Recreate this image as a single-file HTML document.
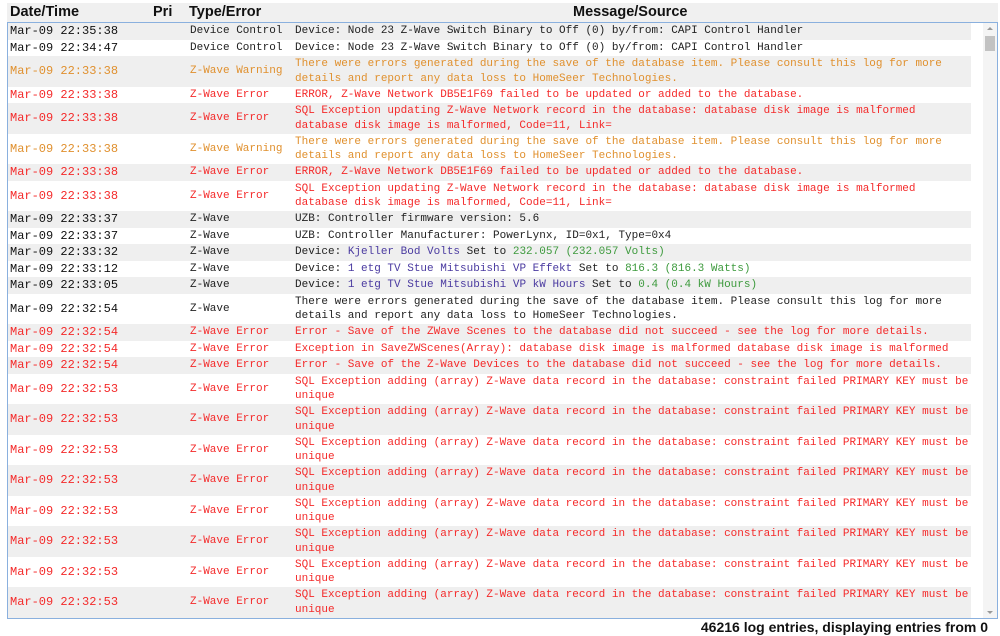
<!DOCTYPE html>
<html><head><meta charset="utf-8"><style>
body{margin:0;width:1000px;height:636px;background:#fff;overflow:hidden;font-family:"Liberation Sans",sans-serif;position:relative}
.hdr{position:absolute;left:7px;top:3px;width:991px;height:19px;background:#f0f0f0}
.hdr span{position:absolute;top:1px;font-weight:bold;font-size:14.5px;color:#111}
.box{position:absolute;left:7px;top:22px;width:989px;height:595px;border:1px solid #8ab0de;overflow:hidden;background:#fff}
.rows{position:absolute;left:0;top:0;width:963px}
.r{position:relative;box-sizing:border-box;font-family:"Liberation Mono",monospace;font-size:11px;line-height:14.5px;padding:1px 0;color:#222}
.r:nth-child(odd){background:#efefef}
.r.d{height:30.5px}.r:not(.d){height:16.5px}
.dt{position:absolute;left:2px;font-size:12px;color:#111;top:1px}
.r.d .dt,.r.d .ty{top:8px}
.ty{position:absolute;left:182px;top:1px}
.m{margin-left:287px;white-space:pre}
.o{color:#e0902e}.o .dt{color:#e0902e}
.e{color:#f42a2a}.e .dt{color:#f42a2a}
.b{color:#4a3aa0}.g{color:#3d9a3d}
.sb{position:absolute;right:0;top:0;width:14px;height:595px;background:#f4f4f4}
.th{position:absolute;right:2px;top:13px;width:10px;height:15px;background:#c2c2c2}
.up,.dn{position:absolute;right:4px;width:0;height:0;border-left:3px solid transparent;border-right:3px solid transparent}
.up{top:4px;border-bottom:3px solid #999}.dn{bottom:4px;border-top:3px solid #999}
.ft{position:absolute;right:12px;top:619px;font-weight:bold;font-size:14px;color:#111}
</style></head><body>
<div class="hdr"><span style="left:3px">Date/Time</span><span style="left:146px">Pri</span><span style="left:182px">Type/Error</span><span style="left:566px">Message/Source</span></div>
<div class="box"><div class="rows">
<div class="r"><span class="dt">Mar-09 22:35:38</span><span class="ty">Device Control</span><div class="m">Device: Node 23 Z-Wave Switch Binary to Off (0) by/from: CAPI Control Handler</div></div>
<div class="r"><span class="dt">Mar-09 22:34:47</span><span class="ty">Device Control</span><div class="m">Device: Node 23 Z-Wave Switch Binary to Off (0) by/from: CAPI Control Handler</div></div>
<div class="r d o"><span class="dt">Mar-09 22:33:38</span><span class="ty">Z-Wave Warning</span><div class="m">There were errors generated during the save of the database item. Please consult this log for more
details and report any data loss to HomeSeer Technologies.</div></div>
<div class="r e"><span class="dt">Mar-09 22:33:38</span><span class="ty">Z-Wave Error</span><div class="m">ERROR, Z-Wave Network DB5E1F69 failed to be updated or added to the database.</div></div>
<div class="r d e"><span class="dt">Mar-09 22:33:38</span><span class="ty">Z-Wave Error</span><div class="m">SQL Exception updating Z-Wave Network record in the database: database disk image is malformed
database disk image is malformed, Code=11, Link=</div></div>
<div class="r d o"><span class="dt">Mar-09 22:33:38</span><span class="ty">Z-Wave Warning</span><div class="m">There were errors generated during the save of the database item. Please consult this log for more
details and report any data loss to HomeSeer Technologies.</div></div>
<div class="r e"><span class="dt">Mar-09 22:33:38</span><span class="ty">Z-Wave Error</span><div class="m">ERROR, Z-Wave Network DB5E1F69 failed to be updated or added to the database.</div></div>
<div class="r d e"><span class="dt">Mar-09 22:33:38</span><span class="ty">Z-Wave Error</span><div class="m">SQL Exception updating Z-Wave Network record in the database: database disk image is malformed
database disk image is malformed, Code=11, Link=</div></div>
<div class="r"><span class="dt">Mar-09 22:33:37</span><span class="ty">Z-Wave</span><div class="m">UZB: Controller firmware version: 5.6</div></div>
<div class="r"><span class="dt">Mar-09 22:33:37</span><span class="ty">Z-Wave</span><div class="m">UZB: Controller Manufacturer: PowerLynx, ID=0x1, Type=0x4</div></div>
<div class="r"><span class="dt">Mar-09 22:33:32</span><span class="ty">Z-Wave</span><div class="m">Device: <span class="b">Kjeller Bod Volts</span> Set to <span class="g">232.057 (232.057 Volts)</span></div></div>
<div class="r"><span class="dt">Mar-09 22:33:12</span><span class="ty">Z-Wave</span><div class="m">Device: <span class="b">1 etg TV Stue Mitsubishi VP Effekt</span> Set to <span class="g">816.3 (816.3 Watts)</span></div></div>
<div class="r"><span class="dt">Mar-09 22:33:05</span><span class="ty">Z-Wave</span><div class="m">Device: <span class="b">1 etg TV Stue Mitsubishi VP kW Hours</span> Set to <span class="g">0.4 (0.4 kW Hours)</span></div></div>
<div class="r d"><span class="dt">Mar-09 22:32:54</span><span class="ty">Z-Wave</span><div class="m">There were errors generated during the save of the database item. Please consult this log for more
details and report any data loss to HomeSeer Technologies.</div></div>
<div class="r e"><span class="dt">Mar-09 22:32:54</span><span class="ty">Z-Wave Error</span><div class="m">Error - Save of the ZWave Scenes to the database did not succeed - see the log for more details.</div></div>
<div class="r e"><span class="dt">Mar-09 22:32:54</span><span class="ty">Z-Wave Error</span><div class="m">Exception in SaveZWScenes(Array): database disk image is malformed database disk image is malformed</div></div>
<div class="r e"><span class="dt">Mar-09 22:32:54</span><span class="ty">Z-Wave Error</span><div class="m">Error - Save of the Z-Wave Devices to the database did not succeed - see the log for more details.</div></div>
<div class="r d e"><span class="dt">Mar-09 22:32:53</span><span class="ty">Z-Wave Error</span><div class="m">SQL Exception adding (array) Z-Wave data record in the database: constraint failed PRIMARY KEY must be
unique</div></div>
<div class="r d e"><span class="dt">Mar-09 22:32:53</span><span class="ty">Z-Wave Error</span><div class="m">SQL Exception adding (array) Z-Wave data record in the database: constraint failed PRIMARY KEY must be
unique</div></div>
<div class="r d e"><span class="dt">Mar-09 22:32:53</span><span class="ty">Z-Wave Error</span><div class="m">SQL Exception adding (array) Z-Wave data record in the database: constraint failed PRIMARY KEY must be
unique</div></div>
<div class="r d e"><span class="dt">Mar-09 22:32:53</span><span class="ty">Z-Wave Error</span><div class="m">SQL Exception adding (array) Z-Wave data record in the database: constraint failed PRIMARY KEY must be
unique</div></div>
<div class="r d e"><span class="dt">Mar-09 22:32:53</span><span class="ty">Z-Wave Error</span><div class="m">SQL Exception adding (array) Z-Wave data record in the database: constraint failed PRIMARY KEY must be
unique</div></div>
<div class="r d e"><span class="dt">Mar-09 22:32:53</span><span class="ty">Z-Wave Error</span><div class="m">SQL Exception adding (array) Z-Wave data record in the database: constraint failed PRIMARY KEY must be
unique</div></div>
<div class="r d e"><span class="dt">Mar-09 22:32:53</span><span class="ty">Z-Wave Error</span><div class="m">SQL Exception adding (array) Z-Wave data record in the database: constraint failed PRIMARY KEY must be
unique</div></div>
<div class="r d e"><span class="dt">Mar-09 22:32:53</span><span class="ty">Z-Wave Error</span><div class="m">SQL Exception adding (array) Z-Wave data record in the database: constraint failed PRIMARY KEY must be
unique</div></div>
</div>
<div class="sb"><div class="up"></div><div class="th"></div><div class="dn"></div></div>
</div>
<div class="ft">46216 log entries, displaying entries from 0</div>
</body></html>
